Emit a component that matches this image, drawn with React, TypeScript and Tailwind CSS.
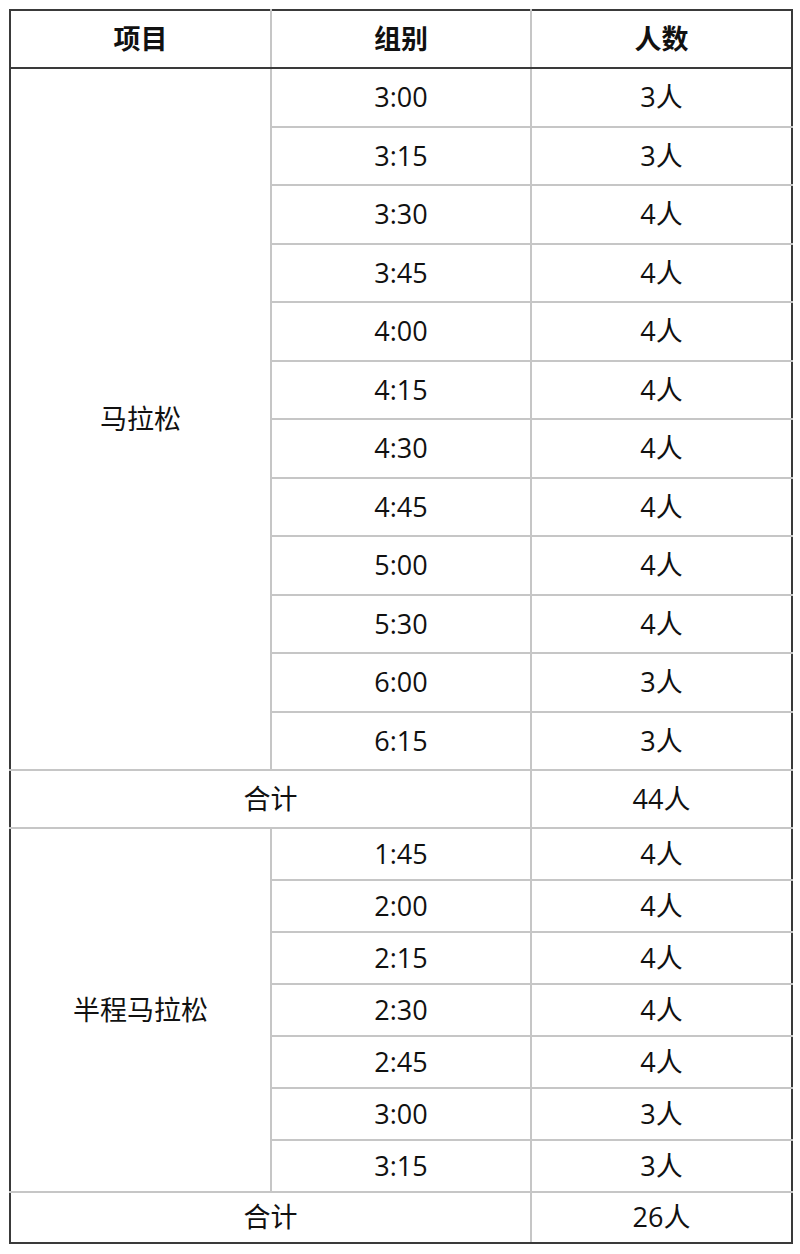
const marathon = [
  ["3:00", "3人"],
  ["3:15", "3人"],
  ["3:30", "4人"],
  ["3:45", "4人"],
  ["4:00", "4人"],
  ["4:15", "4人"],
  ["4:30", "4人"],
  ["4:45", "4人"],
  ["5:00", "4人"],
  ["5:30", "4人"],
  ["6:00", "3人"],
  ["6:15", "3人"],
];

const half = [
  ["1:45", "4人"],
  ["2:00", "4人"],
  ["2:15", "4人"],
  ["2:30", "4人"],
  ["2:45", "4人"],
  ["3:00", "3人"],
  ["3:15", "3人"],
];

const cell = "border-2 border-[#c6c6c6] text-center align-middle p-0";

export default function App() {
  return (
    <div
      className="w-[800px] h-[1254px] bg-white pt-[9px] pl-[9px] text-[27px] text-[#111]"
      style={{ fontFamily: '"Open Sans", "Noto Sans CJK SC", sans-serif' }}
    >
      <table className="w-[782px] table-fixed border-collapse border-2 border-[#3a3a3a]">
        <colgroup>
          <col className="w-[261px]" />
          <col className="w-[260px]" />
          <col className="w-[261px]" />
        </colgroup>
        <thead>
          <tr className="h-[58px]">
            <th className="border-2 border-[#3a3a3a] border-r-[#c6c6c6] font-bold text-center">项目</th>
            <th className="border-2 border-[#3a3a3a] border-x-[#c6c6c6] font-bold text-center">组别</th>
            <th className="border-2 border-[#3a3a3a] border-l-[#c6c6c6] font-bold text-center">人数</th>
          </tr>
        </thead>
        <tbody>
          {marathon.map(([group, count], i) => (
            <tr key={"m" + i} className="h-[58.5px]">
              {i === 0 && (
                <td rowSpan={12} className={cell + " border-l-[#3a3a3a]"}>
                  马拉松
                </td>
              )}
              <td className={cell}>{group}</td>
              <td className={cell + " border-r-[#3a3a3a]"}>{count}</td>
            </tr>
          ))}
          <tr className="h-[58px]">
            <td colSpan={2} className={cell + " border-l-[#3a3a3a]"}>合计</td>
            <td className={cell + " border-r-[#3a3a3a]"}>44人</td>
          </tr>
          {half.map(([group, count], i) => (
            <tr key={"h" + i} className="h-[52px]">
              {i === 0 && (
                <td rowSpan={7} className={cell + " border-l-[#3a3a3a]"}>
                  半程马拉松
                </td>
              )}
              <td className={cell}>{group}</td>
              <td className={cell + " border-r-[#3a3a3a]"}>{count}</td>
            </tr>
          ))}
          <tr className="h-[51px]">
            <td colSpan={2} className={cell + " border-l-[#3a3a3a] border-b-[#3a3a3a]"}>合计</td>
            <td className={cell + " border-r-[#3a3a3a] border-b-[#3a3a3a]"}>26人</td>
          </tr>
        </tbody>
      </table>
    </div>
  );
}
